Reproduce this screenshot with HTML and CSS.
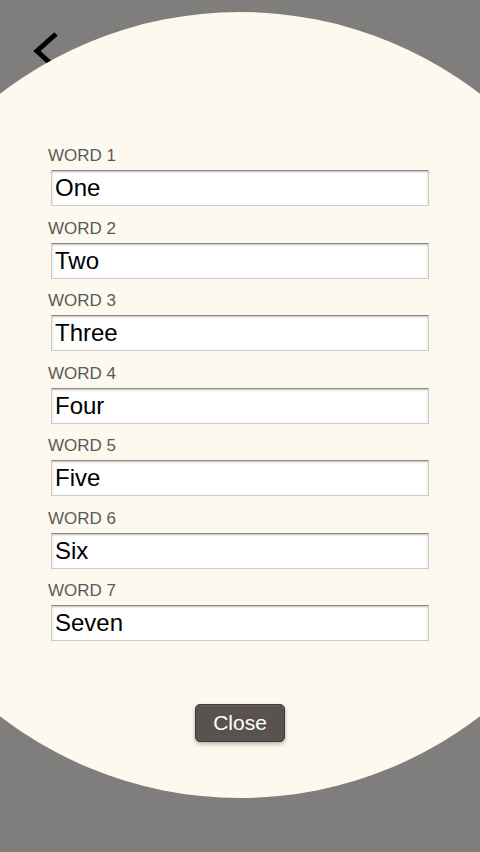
FILE: index.html
```html
<!DOCTYPE html>
<html>
<head>
<meta charset="utf-8">
<link rel="stylesheet" href="styles.css">
</head>
<body>
<div class="screen">
  <header class="topbar">
    <svg class="back" width="32" height="40" viewBox="0 0 32 40"><path d="M26 4 L7 21 L20 33" fill="none" stroke="#000" stroke-width="5" stroke-linejoin="miter"/></svg>
  </header>
  <div class="overlay">
    <div class="disc"></div>
    <form class="words">
      <div class="field"><label>WORD 1</label><div class="input">One</div></div>
      <div class="field"><label>WORD 2</label><div class="input">Two</div></div>
      <div class="field"><label>WORD 3</label><div class="input">Three</div></div>
      <div class="field"><label>WORD 4</label><div class="input">Four</div></div>
      <div class="field"><label>WORD 5</label><div class="input">Five</div></div>
      <div class="field"><label>WORD 6</label><div class="input">Six</div></div>
      <div class="field"><label>WORD 7</label><div class="input">Seven</div></div>
      <div class="actions"><button type="button" class="close">Close</button></div>
    </form>
  </div>
</div>
</body>
</html>
```
FILE: styles.css
```css
html, body {
  margin: 0;
  padding: 0;
  width: 480px;
  height: 852px;
  overflow: hidden;
  background: #7f7e7c;
  font-family: "Liberation Sans", Arial, sans-serif;
}
.screen {
  position: relative;
  width: 480px;
  height: 852px;
}
.topbar {
  display: flex;
  padding: 30px 0 0 30px;
}
.back {
  display: block;
}
.overlay {
  position: absolute;
  inset: 0;
  overflow: hidden;
}
.disc {
  position: absolute;
  left: -153px;
  top: 12px;
  width: 786px;
  height: 786px;
  border-radius: 50%;
  background: #fdf9ef;
}
.words {
  position: relative;
  display: flex;
  flex-direction: column;
  padding: 146px 51px 0 48px;
  margin: 0;
}
.field {
  display: flex;
  flex-direction: column;
  height: 72.5px;
}
.field label {
  font-size: 17px;
  line-height: 20px;
  color: #5b5a58;
  margin-bottom: 4px;
}
.input {
  margin-left: 3px;
  height: 36px;
  box-sizing: border-box;
  background: #fff;
  border: 1px solid #cfccc7;
  border-top-color: #8b8986;
  box-shadow: inset 0 1px 2px rgba(0,0,0,0.25);
  font-size: 24px;
  line-height: 34px;
  padding-left: 3px;
  color: #000;
}
.actions {
  display: flex;
  justify-content: center;
  padding-top: 50px;
  padding-left: 3px;
}
.close {
  width: 90px;
  height: 38px;
  background: #5a5250;
  border: 1px solid #3f3937;
  border-radius: 5px;
  color: #fff;
  font-family: "Liberation Sans", Arial, sans-serif;
  font-size: 21px;
  box-shadow: 0 2px 4px rgba(0,0,0,0.3), inset 0 1px 0 rgba(255,255,255,0.08);
  padding: 0;
}
```
